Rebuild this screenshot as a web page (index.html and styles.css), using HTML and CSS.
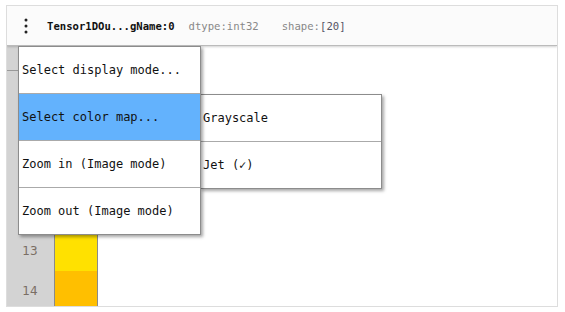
FILE: index.html
```html
<!DOCTYPE html>
<html>
<head>
<meta charset="utf-8">
<link rel="stylesheet" href="styles.css">
</head>
<body>
<div class="panel">
  <div class="header">
    <svg class="dots" width="4" height="16" viewBox="0 0 4 16"><circle cx="2" cy="2" r="1.5" fill="#222"/><circle cx="2" cy="8" r="1.5" fill="#222"/><circle cx="2" cy="14" r="1.5" fill="#222"/></svg>
    <span class="name">Tensor1DOu...gName:0</span>
    <span class="meta">dtype:int32</span>
    <span class="meta shape">shape:<span class="val">[20]</span></span>
  </div>
  <div class="body">
    <div class="row stub"><div class="gut"></div><div class="cell"></div></div>
    <div class="row"><div class="gut"></div><div class="cell c9"></div></div>
    <div class="row"><div class="gut"></div><div class="cell c10"></div></div>
    <div class="row"><div class="gut"></div><div class="cell c11"></div></div>
    <div class="row"><div class="gut"></div><div class="cell c12"></div></div>
    <div class="row"><div class="gut">13</div><div class="cell c13"></div></div>
    <div class="row"><div class="gut">14</div><div class="cell c14"></div></div>
  </div>
</div>
<div class="menu">
  <div class="item">Select display mode...</div>
  <div class="item active">Select color map...</div>
  <div class="item">Zoom in (Image mode)</div>
  <div class="item">Zoom out (Image mode)</div>
</div>
<div class="menu sub">
  <div class="item">Grayscale</div>
  <div class="item">Jet (✓)</div>
</div>
</body>
</html>
```
FILE: styles.css
```css
html, body { margin: 0; padding: 0; background: #fff; }
body { width: 565px; height: 312px; overflow: hidden; position: relative; }
.panel {
  position: relative;
  margin: 5px 0 0 6px;
  width: 550px;
  height: 300px;
  border: 1px solid #ddd;
  overflow: hidden;
}
.header {
  height: 39px;
  background: #fbfbfb;
  border-bottom: 1px solid #bbb;
  box-shadow: 0 1px 2px rgba(0,0,0,0.18);
  display: flex;
  align-items: center;
  padding-left: 17px;
  font-family: "DejaVu Sans Mono", monospace;
  font-size: 10.6px;
  position: relative;
  z-index: 1;
}
.dots { margin-right: 19px; margin-top: 1px; }
.name { font-weight: bold; color: #111; margin-right: 14px; }
.meta { color: #888; margin-right: 23px; }
.shape .val { color: #556; }
.body { display: flex; flex-direction: column; }
.row { display: flex; height: 40px; }
.row.stub { height: 25px; }
.row.stub .gut { border-bottom: 1px solid #999; }
.gut {
  width: 47px;
  background: #d3d3d3;
  color: #7a6e64;
  font-family: "DejaVu Sans", sans-serif;
  font-size: 12px;
  display: flex;
  align-items: center;
  justify-content: center;
  padding-right: 1px;
  box-sizing: border-box;
}
.cell {
  width: 42px;
  border-left: 1px solid #8a8a8a;
  border-right: 1px solid #8a8a8a;
}
.c9 { background: #7fff7a; }
.c10 { background: #b0ff46; }
.c11 { background: #e4ff13; }
.c12 { background: #fff000; }
.c13 { background: #ffe100; }
.c14 { background: #ffbf00; }
.menu {
  position: absolute;
  left: 18px;
  top: 46px;
  width: 181px;
  background: #fff;
  border: 1px solid #8c8c8c;
  box-shadow: 2px 2px 3px rgba(0,0,0,0.35);
  font-family: "DejaVu Sans Mono", monospace;
  font-size: 12px;
  color: #111;
  z-index: 5;
}
.menu.sub { left: 200px; top: 94px; width: 180px; z-index: 4; }
.item {
  height: 46px;
  display: flex;
  align-items: center;
  padding-left: 3px;
  border-top: 1px solid #aaa;
}
.item:first-child { border-top: none; }
.item.active { background: #63b2fd; }
.sub .item { padding-left: 2px; }
```
